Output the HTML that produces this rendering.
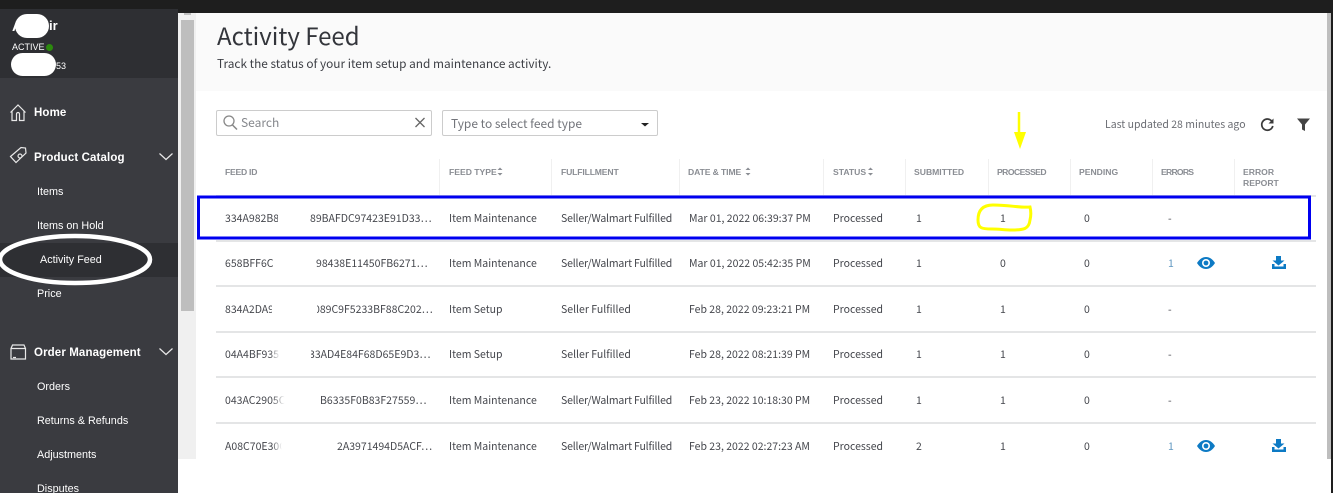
<!DOCTYPE html>
<html><head><meta charset="utf-8"><style>
html,body{margin:0;padding:0;background:#fff;width:1333px;height:493px;overflow:hidden}
body{position:relative;font-family:"Noto Sans CJK JP","Liberation Sans",sans-serif;color:#41434a}
.a{position:absolute}
.t{position:absolute;white-space:nowrap;line-height:16px;font-size:10.5px;transform:translateY(calc(-50% + 2px));color:#44464c}
.f{letter-spacing:-.17px}
.s{position:absolute;white-space:nowrap;line-height:16px;font-family:"Liberation Sans",sans-serif;color:#fff;transform:translateY(calc(-50% + 2px));font-size:10.8px}
.b{font-weight:700;font-size:11.5px;letter-spacing:.12px}
.h{position:absolute;white-space:nowrap;line-height:16px;font-size:8.6px;font-weight:700;color:#8a8d93;transform:translateY(calc(-50% + 1px));font-family:"Liberation Sans",sans-serif}
.l{position:absolute;left:216px;width:1100px;height:2px;background:#e4e5e6}
.d{position:absolute;top:159px;width:1px;height:36px;background:#f0f0f0}
.c{position:absolute;overflow:hidden;height:18px;transform:translateY(calc(-50% + 2px));line-height:18px;font-size:10.5px;white-space:nowrap;color:#44464c}
.m{position:absolute;width:14px;height:12px;background:linear-gradient(90deg,rgba(255,255,255,0),#fff 70%)}
</style></head><body>
<div class="a" style="left:0;top:0;width:1333px;height:13px;background:#1e1e1e"></div>
<div class="a" style="left:0;top:9px;width:178px;height:484px;background:#3a3b40"></div>
<div class="a" style="left:0;top:9px;width:178px;height:69px;background:#2e2f33"></div>
<div class="a" style="left:178px;top:13px;width:18px;height:446px;background:#f0f0f0"></div>
<div class="a" style="left:181px;top:20px;width:13px;height:291px;background:#bebebe"></div>
<div class="a" style="left:184px;top:13px;width:7px;height:2px;background:#bebebe"></div>
<div class="a" style="left:196px;top:13px;width:1131px;height:78px;background:#fafafa"></div>
<div class="a" style="left:1327px;top:13px;width:4px;height:446px;background:#bebebe"></div>
<div class="a" style="left:1331px;top:0;width:2px;height:493px;background:#1e1e1e"></div>

<!-- sidebar -->
<div class="s" style="left:12px;top:24px;font-size:14px;font-weight:700">A</div>
<div class="s" style="left:49px;top:24px;font-size:13px;font-weight:700">ir</div>
<div class="a" style="left:15px;top:14px;width:34px;height:24px;background:#fff;border-radius:14px"></div>
<div class="s" style="left:12px;top:45px;font-size:9px">ACTIVE</div>
<div class="a" style="left:46px;top:44px;width:7px;height:7px;background:#2c8a0e;border-radius:50%"></div>
<div class="a" style="left:11px;top:53px;width:45px;height:23px;background:#fff;border-radius:12px"></div>
<div class="s" style="left:56px;top:64px;font-size:9px">53</div>

<svg class="a" style="left:0;top:0" width="178" height="493" fill="none" stroke="#e8e8e8" stroke-width="1.2">
<path d="M10.500 112.500 18 105l7.500 7.500M12 111v9.500h4.500v-6.500a1.500 1.500 0 0 1 3 0v6.500h4.500V111"/>
<path d="M10.500 156.500 21 147.500l4.500 0.500.5 5-10 9.500-5.500-6zM20 154a2 2 0 1 0 .01 0"/>
<path d="M159.500 153.500l6.500 6 6.500-6M159.500 348.500l6.500 6 6.500-6"/>
<path d="M11 348.500h14.500v10.500H11zM11 348.500l1.500-3.500h11.500l1.500 3.500"/>
<path d="M13 357.500h3" />
</svg>
<div class="s b" style="left:34px;top:111px">Home</div>
<div class="s b" style="left:34px;top:156px">Product Catalog</div>
<div class="s" style="left:37px;top:190px">Items</div>
<div class="s" style="left:37px;top:224px">Items on Hold</div>
<div class="a" style="left:0;top:243px;width:178px;height:34px;background:#2e2f33"></div>
<div class="s" style="left:40px;top:258px">Activity Feed</div>
<div class="s" style="left:37px;top:292px">Price</div>
<div class="s b" style="left:34px;top:351px">Order Management</div>
<div class="s" style="left:37px;top:385px">Orders</div>
<div class="s" style="left:37px;top:419px">Returns &amp; Refunds</div>
<div class="s" style="left:37px;top:453px">Adjustments</div>
<div class="s" style="left:37px;top:487px">Disputes</div>

<!-- page header -->
<div class="t" style="left:217px;top:33px;font-size:24px;line-height:30px;color:#33353b">Activity Feed</div>
<div class="t" style="left:217px;top:62px;font-size:11.85px;color:#3d3f45">Track the status of your item setup and maintenance activity.</div>

<!-- filters -->
<div class="a" style="left:216px;top:110px;width:214px;height:24px;border:1px solid #ccc;border-radius:2px"></div>
<div class="a" style="left:442px;top:110px;width:214px;height:24px;border:1px solid #ccc;border-radius:2px"></div>
<div class="t" style="left:241px;top:121px;font-size:12px;color:#85878c">Search</div>
<div class="t" style="left:451px;top:122px;font-size:11.950px;color:#72747a">Type to select feed type</div>
<div class="t" style="left:1105px;top:123px;font-size:10.500px;color:#6b6d73">Last updated 28 minutes ago</div>
<svg class="a" style="left:0;top:0" width="1333" height="493" fill="none">
<circle cx="229" cy="121" r="5" stroke="#888" stroke-width="1.300"/><path d="M232.500 125l4.500 4.500" stroke="#888" stroke-width="1.500"/>
<path d="M415.500 118l9 9M424.500 118l-9 9" stroke="#666" stroke-width="1.300"/>
<path d="M641 123h8l-4 3.500z" fill="#222"/>
<path d="M1272.300 122a5.600 5.600 0 1 0 .5 4" stroke="#3b3b3b" stroke-width="1.700"/><path d="M1273.500 118.500v5h-5z" fill="#3b3b3b"/>
<path d="M1297 118.500h13l-5 6v6.500l-3-1.500v-5z" fill="#444"/>
<path d="M497.500 170l2.500-2.500 2.500 2.500zM497.500 173l2.500 2.500 2.500-2.500z" fill="#8a8d93"/>
<path d="M745.500 170l2.500-2.500 2.500 2.500zM745.500 173l2.500 2.500 2.500-2.500z" fill="#8a8d93"/>
<path d="M868 170l2.500-2.500 2.500 2.500zM868 173l2.500 2.500 2.500-2.500z" fill="#8a8d93"/>
</svg>

<!-- header cols -->
<div class="d" style="left:439px"></div><div class="d" style="left:551px"></div><div class="d" style="left:679px"></div><div class="d" style="left:823px"></div><div class="d" style="left:905px"></div><div class="d" style="left:988px"></div><div class="d" style="left:1070px"></div><div class="d" style="left:1152px"></div><div class="d" style="left:1234px"></div>
<div class="h" style="left:225px;top:171px;letter-spacing:-.25px">FEED ID</div>
<div class="h" style="left:449px;top:171px">FEED TYPE</div>
<div class="h" style="left:561px;top:171px;letter-spacing:-.15px">FULFILLMENT</div>
<div class="h" style="left:688px;top:171px;letter-spacing:-.1px">DATE &amp; TIME</div>
<div class="h" style="left:833px;top:171px">STATUS</div>
<div class="h" style="left:914px;top:171px">SUBMITTED</div>
<div class="h" style="left:997px;top:171px;letter-spacing:-.55px">PROCESSED</div>
<div class="h" style="left:1079px;top:171px">PENDING</div>
<div class="h" style="left:1161px;top:171px;letter-spacing:-.75px">ERRORS</div>
<div class="h" style="left:1243px;top:171px">ERROR</div>
<div class="h" style="left:1243px;top:182px">REPORT</div>

<!-- lines -->
<div class="l" style="top:195px"></div><div class="l" style="top:240px"></div><div class="l" style="top:285px"></div><div class="l" style="top:331px"></div><div class="l" style="top:376px"></div><div class="l" style="top:422px"></div>

<!-- row 1 -->
<div class="c" style="left:225px;width:53px;top:217px">334A982B8</div>
<div class="c" style="left:310px;width:128px;top:217px">89BAFDC97423E91D33…</div>
<div class="t" style="left:449px;top:217px">Item Maintenance</div><div class="t f" style="left:561px;top:217px">Seller/Walmart Fulfilled</div><div class="t" style="left:689px;top:217px">Mar 01, 2022 06:39:37 PM</div><div class="t" style="left:833px;top:217px">Processed</div><div class="t" style="left:916px;top:217px">1</div><div class="t" style="left:1000px;top:217px">1</div><div class="t" style="left:1084px;top:217px">0</div><div class="t" style="left:1168px;top:217px">-</div>
<!-- row 2 -->
<div class="c" style="left:225px;width:48px;top:262px">658BFF6C</div>
<div class="c" style="left:316px;width:122px;top:262px">98438E11450FB6271…</div>
<div class="t" style="left:449px;top:262px">Item Maintenance</div><div class="t f" style="left:561px;top:262px">Seller/Walmart Fulfilled</div><div class="t" style="left:689px;top:262px">Mar 01, 2022 05:42:35 PM</div><div class="t" style="left:833px;top:262px">Processed</div><div class="t" style="left:916px;top:262px">1</div><div class="t" style="left:1000px;top:262px">0</div><div class="t" style="left:1084px;top:262px">0</div><div class="t" style="left:1168px;top:262px;color:#5f97c0">1</div>
<!-- row 3 -->
<div class="c" style="left:225px;width:47px;top:308px">834A2DA9</div>
<div class="c" style="left:317px;width:122px;top:308px;text-indent:-3px">089C9F5233BF88C202…</div>
<div class="t" style="left:449px;top:308px">Item Setup</div><div class="t" style="left:561px;top:308px">Seller Fulfilled</div><div class="t" style="left:689px;top:308px">Feb 28, 2022 09:23:21 PM</div><div class="t" style="left:833px;top:308px">Processed</div><div class="t" style="left:916px;top:308px">1</div><div class="t" style="left:1000px;top:308px">1</div><div class="t" style="left:1084px;top:308px">0</div><div class="t" style="left:1168px;top:308px">-</div>
<!-- row 4 -->
<div class="c" style="left:225px;width:57px;top:353px">04A4BF935</div><div class="m" style="left:270px;top:349px"></div>
<div class="c" style="left:311px;width:128px;top:353px;text-indent:-2px">33AD4E84F68D65E9D3…</div>
<div class="t" style="left:449px;top:353px">Item Setup</div><div class="t" style="left:561px;top:353px">Seller Fulfilled</div><div class="t" style="left:689px;top:353px">Feb 28, 2022 08:21:39 PM</div><div class="t" style="left:833px;top:353px">Processed</div><div class="t" style="left:916px;top:353px">1</div><div class="t" style="left:1000px;top:353px">1</div><div class="t" style="left:1084px;top:353px">0</div><div class="t" style="left:1168px;top:353px">-</div>
<!-- row 5 -->
<div class="c" style="left:225px;width:65px;top:399px">043AC2905C2</div><div class="m" style="left:272px;top:395px;width:18px"></div>
<div class="c" style="left:320px;width:118px;top:399px">B6335F0B83F27559…</div>
<div class="t" style="left:449px;top:399px">Item Maintenance</div><div class="t f" style="left:561px;top:399px">Seller/Walmart Fulfilled</div><div class="t" style="left:689px;top:399px">Feb 23, 2022 10:18:30 PM</div><div class="t" style="left:833px;top:399px">Processed</div><div class="t" style="left:916px;top:399px">1</div><div class="t" style="left:1000px;top:399px">1</div><div class="t" style="left:1084px;top:399px">0</div><div class="t" style="left:1168px;top:399px">-</div>
<!-- row 6 -->
<div class="c" style="left:225px;width:62px;top:445px">A08C70E30C</div><div class="m" style="left:272px;top:441px"></div>
<div class="c" style="left:337px;width:101px;top:445px">2A3971494D5ACF…</div>
<div class="t" style="left:449px;top:445px">Item Maintenance</div><div class="t f" style="left:561px;top:445px">Seller/Walmart Fulfilled</div><div class="t" style="left:689px;top:445px">Feb 23, 2022 02:27:23 AM</div><div class="t" style="left:833px;top:445px">Processed</div><div class="t" style="left:916px;top:445px">2</div><div class="t" style="left:1000px;top:445px">1</div><div class="t" style="left:1084px;top:445px">0</div><div class="t" style="left:1168px;top:445px;color:#5f97c0">1</div>

<!-- mask below content -->
<div class="a" style="left:178px;top:459px;width:1153px;height:34px;background:#fff"></div>

<!-- overlays -->
<svg class="a" style="left:0;top:0" width="1333" height="493" fill="none">
<rect x="198.500" y="197" width="1111" height="41" stroke="#0000f0" stroke-width="3"/>
<path d="M1019 112v21" stroke="#ffff00" stroke-width="2.500"/><path d="M1014 132h12l-6 17z" fill="#ffff00"/>
<path d="M1030 207c-10 1-20-2-37-2-9 0-15 4-15 15 0 8 3 9 14 9 8 0 12 1 20 1 12 0 17-1 18-10 1-4 1-9 0-13z" stroke="#ffff00" stroke-width="3"/>
<ellipse cx="75" cy="259.500" rx="75" ry="23.500" stroke="#fff" stroke-width="4.500"/>
<g fill="#0d7ac4">
<path d="M1197 263c2.500-4 5.500-6 9-6s6.500 2 9 6c-2.500 4-5.500 6-9 6s-6.500-2-9-6z"/>
<path d="M1197 446c2.500-4 5.500-6 9-6s6.500 2 9 6c-2.500 4-5.500 6-9 6s-6.500-2-9-6z"/>
<path d="M1276 256h5v4.500h3.500l-6 5-6-5h3.500zM1272 264h2.500v2.500h9V264h2.500v5h-14z"/>
<path d="M1276 439h5v4.500h3.500l-6 5-6-5h3.500zM1272 447h2.500v2.500h9V447h2.500v5h-14z"/>
</g>
<circle cx="1206" cy="263" r="4" fill="#fff"/><circle cx="1206" cy="263" r="2.400" fill="#0d7ac4"/>
<circle cx="1206" cy="446" r="4" fill="#fff"/><circle cx="1206" cy="446" r="2.400" fill="#0d7ac4"/>
</svg>
</body></html>
